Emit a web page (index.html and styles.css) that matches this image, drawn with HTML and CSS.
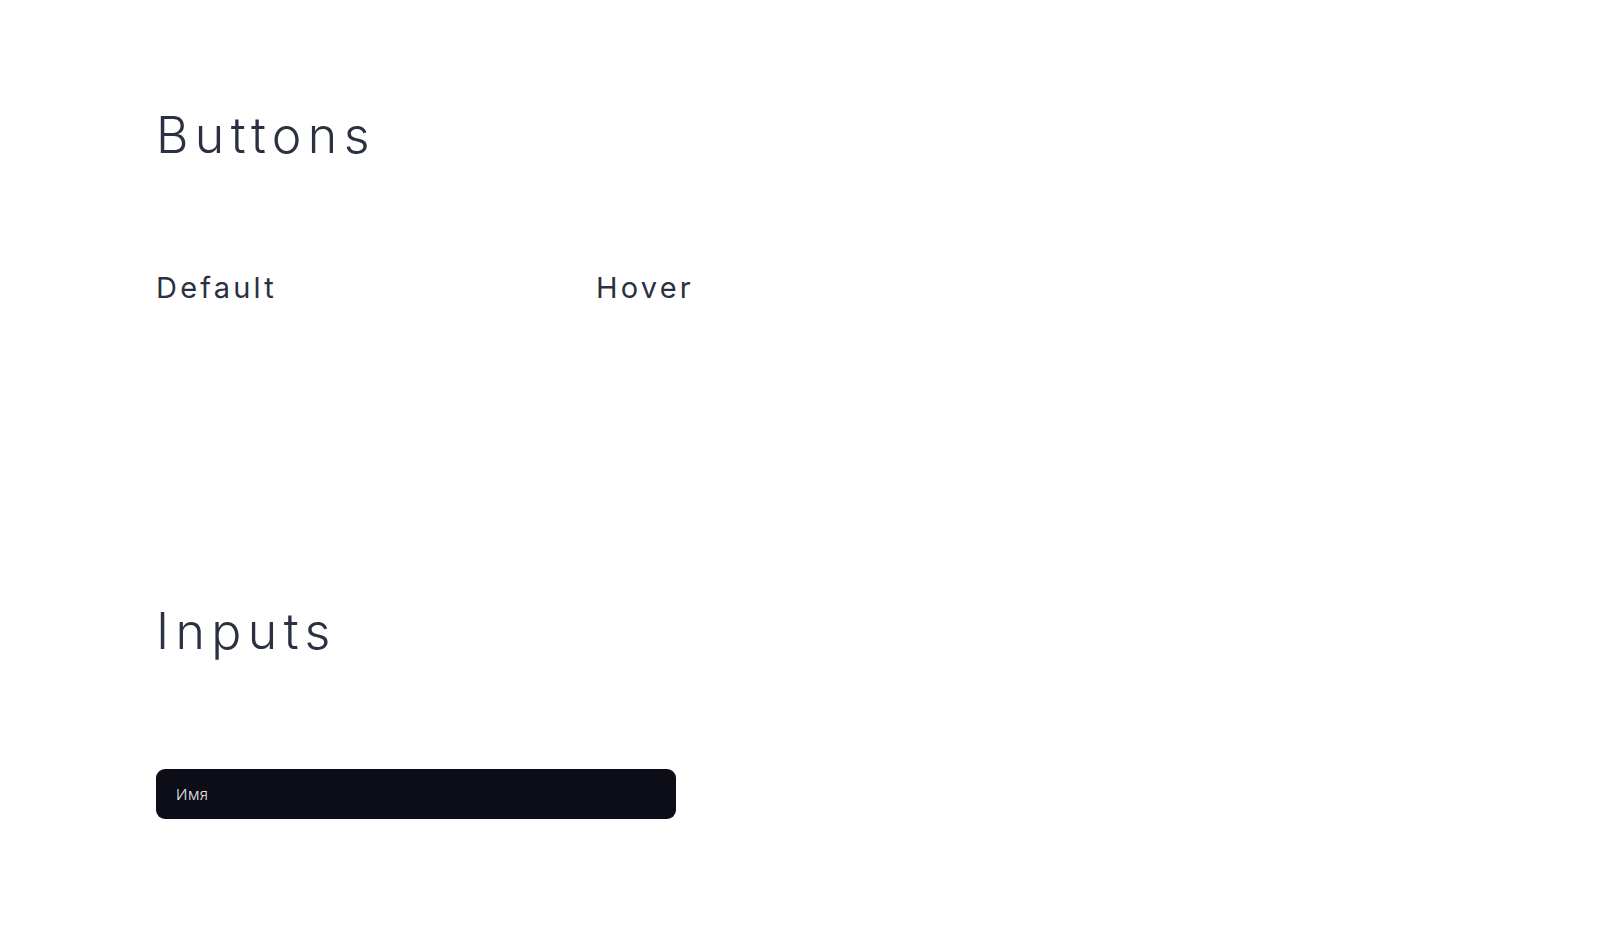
FILE: index.html
```html
<!DOCTYPE html>
<html lang="ru">
<head>
<meta charset="utf-8">
<link rel="stylesheet" href="styles.css">
</head>
<body>
<main class="page">
  <section class="section section-buttons">
    <h1 class="section-title">Buttons</h1>
    <div class="states">
      <div class="state"><h2 class="state-title">Default</h2></div>
      <div class="state"><h2 class="state-title">Hover</h2></div>
    </div>
  </section>
  <section class="section section-inputs">
    <h1 class="section-title">Inputs</h1>
    <div class="field"><span class="field-placeholder">Имя</span></div>
  </section>
</main>
</body>
</html>
```
FILE: styles.css
```css
* { box-sizing: border-box; }
html, body { margin: 0; padding: 0; background: #ffffff; }
body { font-family: Inter, "Noto Sans", sans-serif; color: #2b3142; }
.page { padding: 110px 0 0 156px; }
.section-title {
  margin: 0;
  font-size: 50px;
  line-height: 1;
  font-weight: 300;
  letter-spacing: 6.4px;
}
.states { display: flex; margin-top: 113px; height: 333px; }
.state { width: 440px; }
.state-title {
  margin: 0;
  font-size: 29px;
  line-height: 1;
  font-weight: 400;
  letter-spacing: 3.2px;
}
.section-inputs .field { margin-top: 113px; }
.field {
  width: 520px;
  height: 50px;
  background: #0c0d17;
  border-radius: 9px;
  display: flex;
  align-items: center;
  padding: 0 20px;
}
.field-placeholder { color: #e8e8ee; font-size: 15px; font-weight: 300; letter-spacing: 0.5px; }
```
